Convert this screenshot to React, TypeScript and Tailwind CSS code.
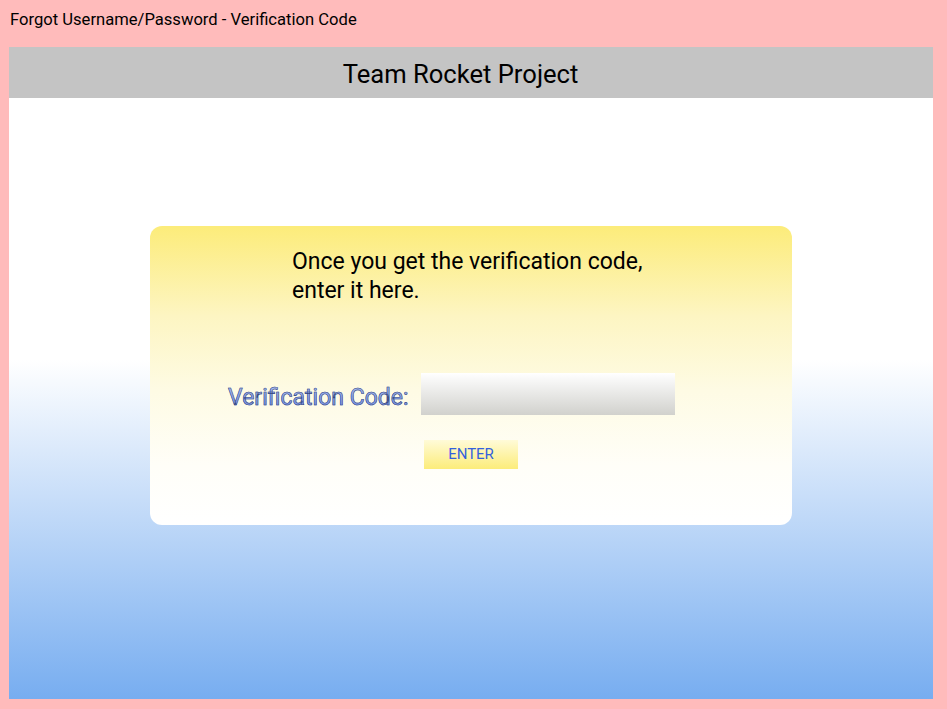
export default function App() {
  return (
    <div className="w-[947px] h-[709px] bg-[#ffbbbb] flex flex-col font-['Roboto',sans-serif] text-black overflow-hidden">
      {/* page caption */}
      <div className="h-[47px] pl-[10px] pt-[9px] text-[16.6px] leading-[22px]">
        Forgot Username/Password - Verification Code
      </div>

      {/* main frame */}
      <div className="mx-[9px] mr-[14px] h-[652px] flex flex-col bg-[linear-gradient(to_bottom,#ffffff_48%,#77adf0_100%)]">
        <header className="h-[51px] bg-[#c4c4c4] flex items-center justify-center pr-[21px] pt-[3px] text-[25.6px]">
          Team Rocket Project
        </header>

        <div className="flex-1 pt-[128px]">
          <div className="w-[642px] h-[299px] mx-auto rounded-[12px] bg-[linear-gradient(to_bottom,#fcec7a_0%,#fdf5c2_30%,#fefbe4_55%,#fffef8_80%,#ffffff_100%)] flex flex-col">
            <p className="pl-[142px] pt-[21px] w-[530px] text-[23px] leading-[29px]">
              Once you get the verification code, enter it here.
            </p>

            <div className="mt-[68px] pl-[78px] flex items-center gap-[12px]">
              <label className="pt-[7px] text-[23px] leading-[29px] bg-[linear-gradient(to_bottom,#c2d2fa,#6b8ce8)] bg-clip-text text-transparent [-webkit-text-stroke:0.6px_#34437a]">
                Verification Code:
              </label>
              <input
                type="text"
                className="w-[254px] h-[42px] bg-[linear-gradient(to_bottom,#ffffff,#d1d1cd)] outline-none border-0"
              />
            </div>

            <button className="mt-[25px] mx-auto w-[94px] h-[29px] bg-[linear-gradient(to_bottom,#fffbd8,#fcec7a)] text-[#3461dd] text-[15px] leading-[29px]">
              ENTER
            </button>
          </div>
        </div>
      </div>
    </div>
  );
}
